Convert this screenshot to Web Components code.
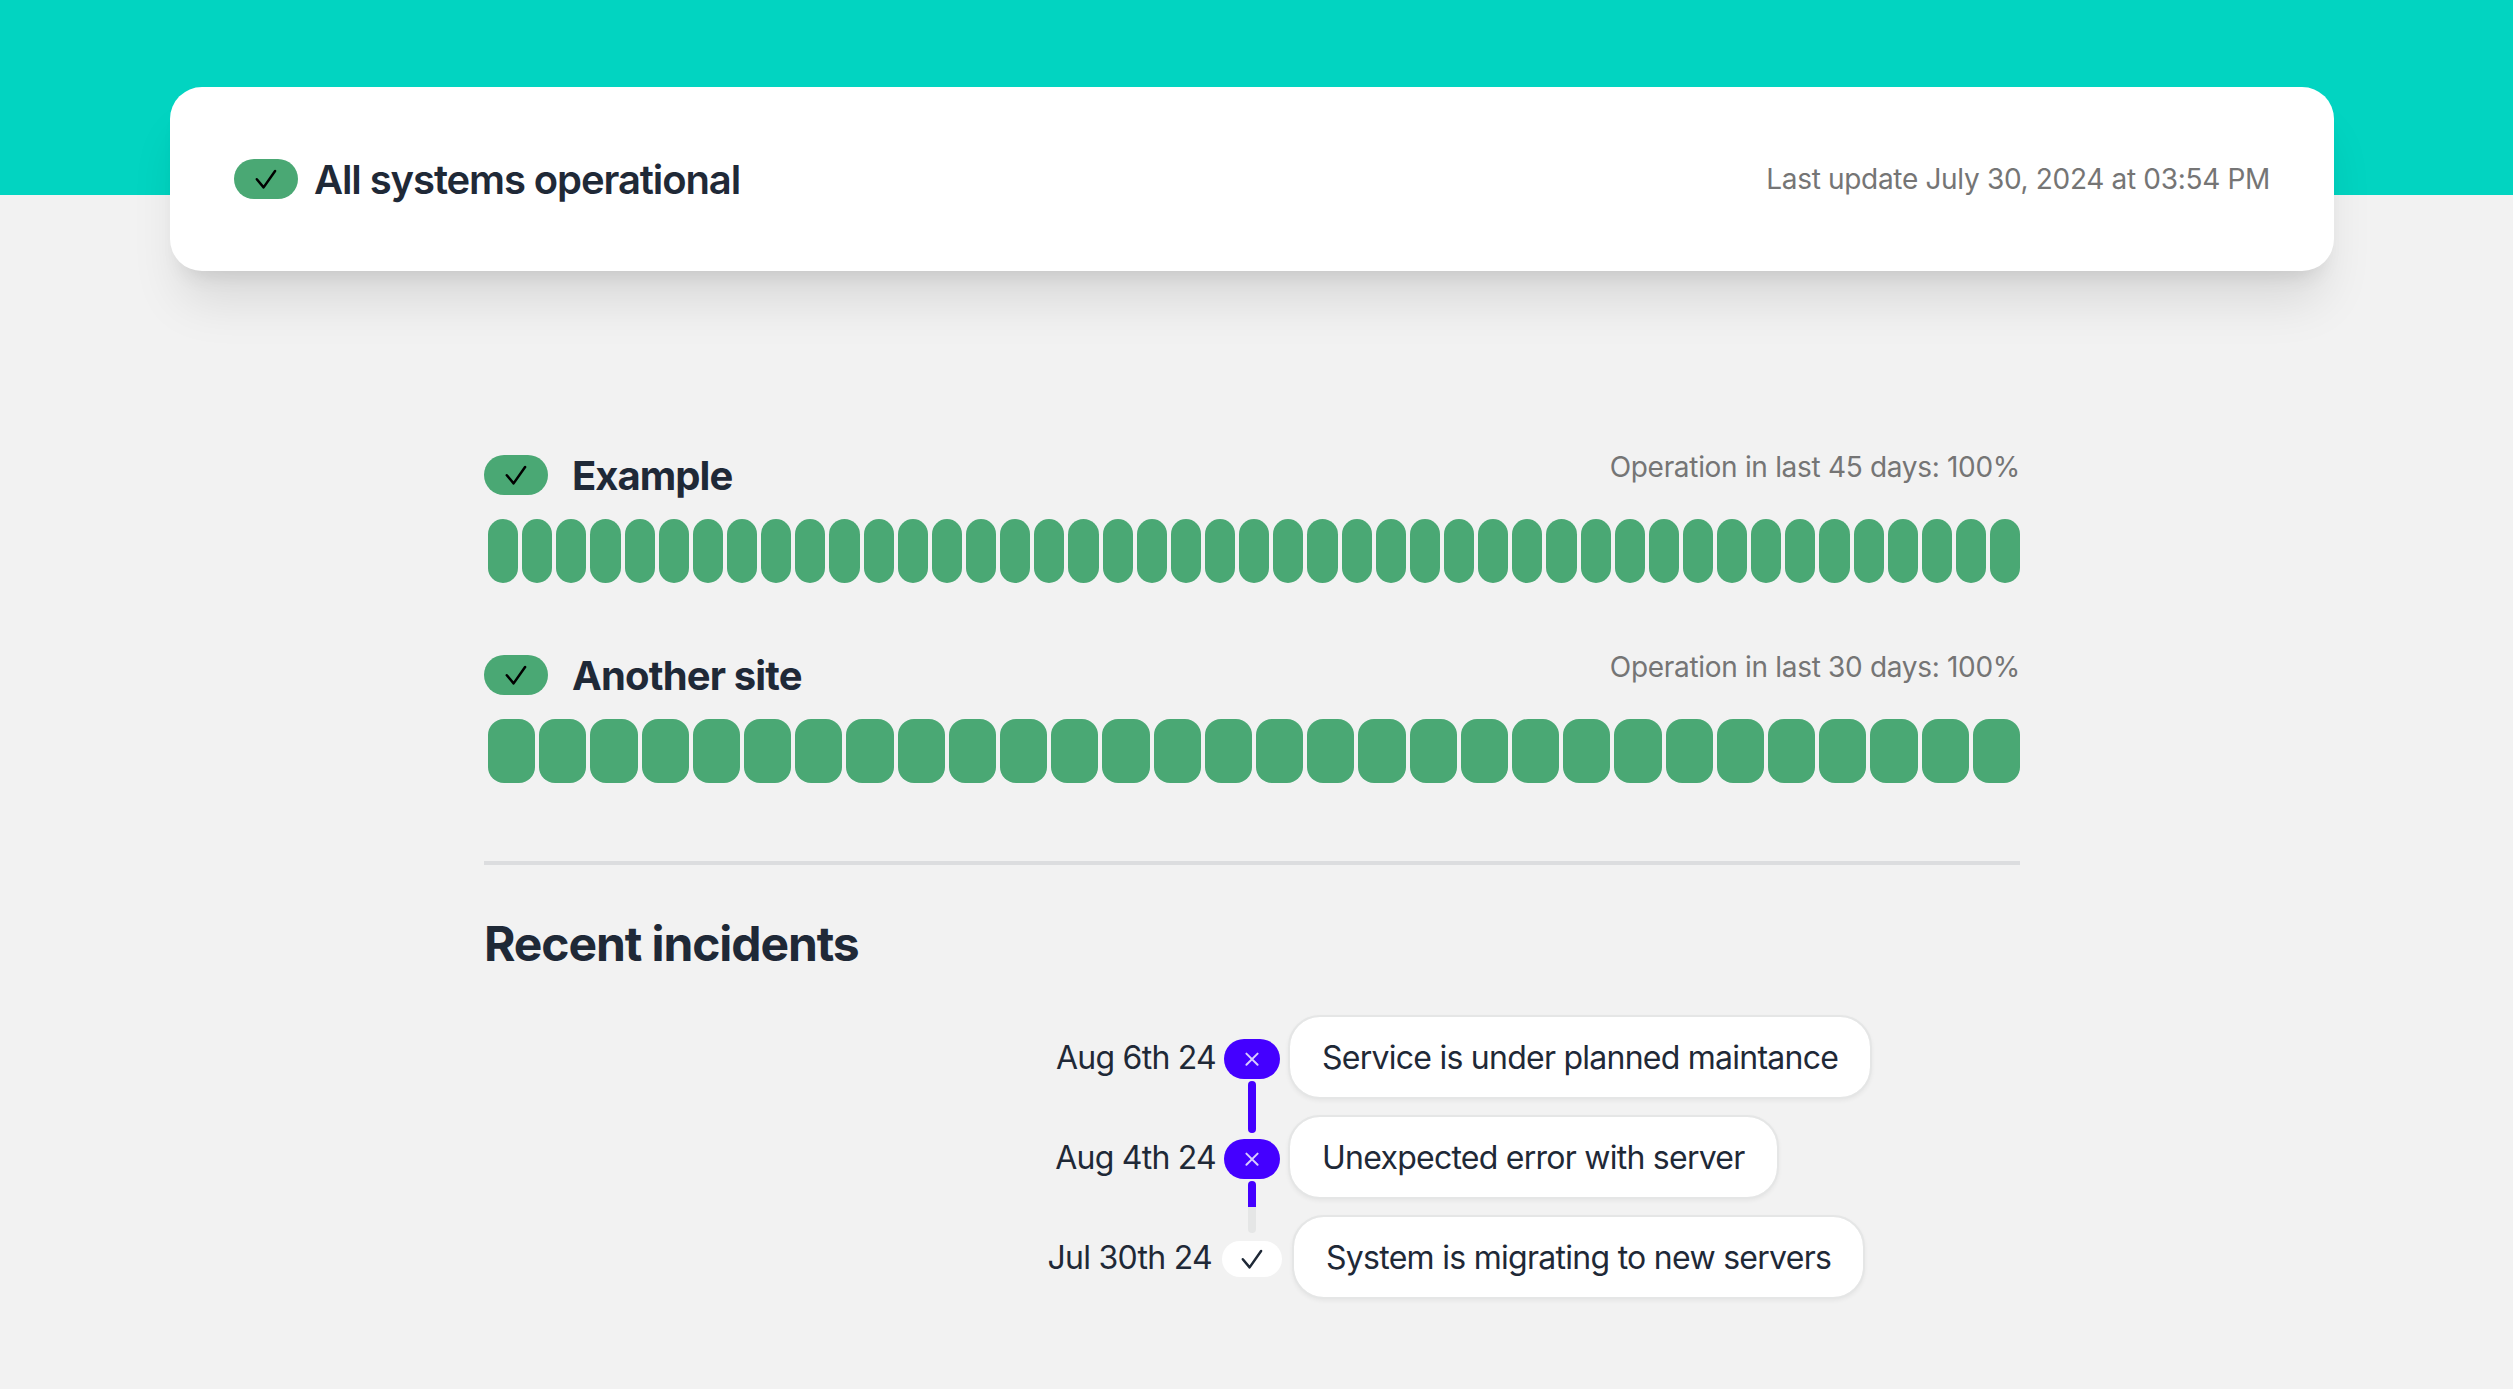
<!DOCTYPE html>
<html lang="en">
<head>
<meta charset="utf-8">
<title>Status</title>
<style>
  body { margin: 0; min-height: 1389px; background: #f2f2f2; color: #1f2937; font-family: Inter, "Liberation Sans", sans-serif; font-size: 32px; line-height: 48px; }
</style>
</head>
<body>
<status-page>
  <status-summary slot="summary" updated="Last update July 30, 2024 at 03:54 PM">All systems operational</status-summary>
  <site-uptime bars="45" summary="Operation in last 45 days: 100%" fit="-0.95px">Example</site-uptime>
  <site-uptime bars="30" summary="Operation in last 30 days: 100%" fit="-0.85px">Another site</site-uptime>
  <incident-list slot="incidents" heading="Recent incidents">
    <incident-row date="Aug 6th 24" state="error" line="full">Service is under planned maintance</incident-row>
    <incident-row date="Aug 4th 24" state="error" line="half">Unexpected error with server</incident-row>
    <incident-row date="Jul 30th 24" state="done">System is migrating to new servers</incident-row>
  </incident-list>
</status-page>
<script>
const define = (name, render) => customElements.define(name, class extends HTMLElement {
  constructor() { super(); this.attachShadow({ mode: 'open' }); }
  connectedCallback() { this.shadowRoot.innerHTML = render(this); }
});

define('status-pill', el => {
  const state = el.getAttribute('state') || 'ok';
  const icon = {
    ok: '<svg width="64" height="40"><path d="M22.8 20.2L29.6 28.4L41.1 12" stroke="#000"/></svg>',
    error: '<svg width="56" height="40"><path d="M22.4 14.6L33.6 25.8M33.6 14.6L22.4 25.8" stroke="#d9ccff" style="stroke-width:2"/></svg>',
    done: '<svg width="60" height="36"><path d="M20.8 18.2L27.6 26.4L39.1 10" stroke="#1f2937"/></svg>'
  }[state];
  const bg = { ok: '#4aa874', error: '#4400ff', done: '#fff' }[state];
  return `<style>
    :host { display: block; flex: none; }
    svg { display: block; border-radius: 20px; background: ${bg}; }
    path { fill: none; stroke-width: 2.5; stroke-linecap: round; stroke-linejoin: round; }
  </style>${icon}`;
});

define('status-summary', el => `<style>
    :host { display: flex; align-items: center; justify-content: space-between; box-sizing: border-box; height: 184px; margin: 0 179px 0 170px; padding: 0 64px; border-radius: 32px; background: #fff; box-shadow: 0 40px 50px -10px rgba(0,0,0,.1), 0 16px 20px -12px rgba(0,0,0,.1); }
    .title { display: flex; align-items: center; gap: 16px; }
    h1 { margin: 0; padding-top: 1px; font-size: 40px; line-height: 56px; font-weight: 600; letter-spacing: -1.1px; white-space: nowrap; }
    span { font-size: 28px; line-height: 40px; letter-spacing: -.32px; color: #757575; white-space: nowrap; }
  </style>
  <div class="title"><status-pill></status-pill><h1><slot></slot></h1></div>
  <span>${el.getAttribute('updated')}</span>`);

define('site-uptime', el => `<style>
    :host { display: block; }
    header { display: flex; align-items: flex-start; justify-content: space-between; height: 56px; margin-bottom: 16px; }
    .name { display: flex; align-items: center; gap: 24px; height: 56px; }
    h2 { margin: 0; padding-top: 1px; font-size: 40px; line-height: 56px; font-weight: 700; letter-spacing: ${el.getAttribute('fit')}; }
    span { font-size: 28px; line-height: 40px; letter-spacing: -.31px; color: #757575; }
    .bars { display: flex; height: 64px; }
    i { flex: 1; margin-left: 4px; border-radius: 16px; background: #4aa874; }
  </style>
  <header><div class="name"><status-pill></status-pill><h2><slot></slot></h2></div><span>${el.getAttribute('summary')}</span></header>
  <div class="bars">${'<i></i>'.repeat(+el.getAttribute('bars'))}</div>`);

define('incident-row', el => {
  const state = el.getAttribute('state');
  const line = el.getAttribute('line');
  const done = state === 'done';
  return `<style>
    :host { display: grid; grid-template-columns: ${done ? '728px 60px' : '732px 56px'} auto; column-gap: ${done ? '10px' : '8px'}; justify-content: start; height: 100px; letter-spacing: ${done ? '-.72px' : '-.75px'}; }
    .date { padding-top: 18.5px; text-align: right; }
    .mid { display: flex; flex-direction: column; align-items: center; padding-top: ${done ? 26 : 24}px; }
    .line { width: 8px; height: 52px; margin-top: 2px; border-radius: 4px; background: ${line === 'full' ? '#4400ff' : 'linear-gradient(#4400ff 50%, #e5e6e6 50%)'}; }
    .box { box-sizing: border-box; height: 84px; padding: 16.5px 32px 15.5px; border: 2px solid #e5e6e6; border-radius: 32px; background: #fff; background-clip: padding-box; box-shadow: 0 2px 4px rgba(0,0,0,.05); white-space: nowrap; }
  </style>
  <div class="date">${el.getAttribute('date')}</div>
  <div class="mid"><status-pill state="${state}"></status-pill>${line ? '<div class="line"></div>' : ''}</div>
  <div class="box"><slot></slot></div>`;
});

define('incident-list', el => `<style>
    :host { display: block; margin-top: 78px; border-top: 4px solid #dcdddf; padding-top: 42px; }
    h2 { margin: 0 0 35.5px; padding-top: .5px; font-size: 48px; line-height: 72px; font-weight: 700; letter-spacing: -1.1px; }
  </style>
  <h2>${el.getAttribute('heading')}</h2><slot></slot>`);

define('status-page', () => `<style>
    :host { display: block; }
    .top { height: 271px; padding-top: 87px; box-sizing: border-box; background: linear-gradient(#02d4c1 195px, transparent 195px); }
    main { width: 1536px; margin: 176px 0 0 484px; }
    .sites { display: flex; flex-direction: column; gap: 64px; }
  </style>
  <div class="top"><slot name="summary"></slot></div>
  <main><div class="sites"><slot></slot></div><slot name="incidents"></slot></main>`);
</script>
</body>
</html>
